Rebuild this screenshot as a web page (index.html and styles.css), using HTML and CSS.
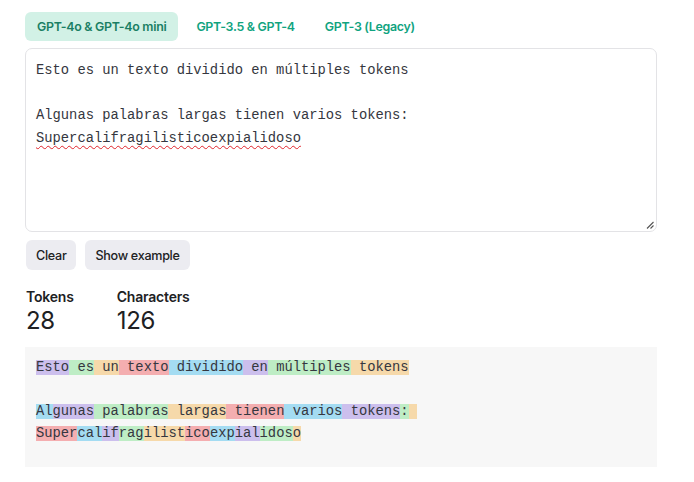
FILE: index.html
```html
<!DOCTYPE html>
<html lang="es">
<head>
<meta charset="utf-8">
<title>Tokenizer</title>
<link rel="stylesheet" href="styles.css">
</head>
<body>
<div class="app">
  <div class="tabs">
    <button class="tab active">GPT-4o &amp; GPT-4o mini</button>
    <button class="tab">GPT-3.5 &amp; GPT-4</button>
    <button class="tab">GPT-3 (Legacy)</button>
  </div>
  <div class="editor">
    <div class="editor-text">Esto es un texto dividido en múltiples tokens

Algunas palabras largas tienen varios tokens:
<span class="misspelled">Supercalifragilisticoexpialidoso</span></div>
    <svg class="resize" width="8" height="8" viewBox="0 0 8 8"><path d="M1 7.5 L7.5 1 M4.5 7.5 L7.5 4.5" stroke="#555" stroke-width="1.1" fill="none"/></svg>
  </div>
  <div class="actions">
    <button class="btn">Clear</button>
    <button class="btn">Show example</button>
  </div>
  <div class="stats">
    <div class="stat">
      <div class="stat-label">Tokens</div>
      <div class="stat-value">28</div>
    </div>
    <div class="stat">
      <div class="stat-label">Characters</div>
      <div class="stat-value">126</div>
    </div>
  </div>
  <div class="output"><span class="t0">Esto</span><span class="t1"> es</span><span class="t2"> un</span><span class="t3"> texto</span><span class="t4"> dividido</span><span class="t0"> en</span><span class="t1"> múltiples</span><span class="t2"> tokens</span>

<span class="t4">Al</span><span class="t0">gunas</span><span class="t1"> palabras</span><span class="t2"> largas</span><span class="t3"> tienen</span><span class="t4"> varios</span><span class="t0"> tokens</span><span class="t1">:</span><span class="t2"> </span>
<span class="t3">Super</span><span class="t4">cal</span><span class="t0">if</span><span class="t1">rag</span><span class="t2">ilist</span><span class="t3">ico</span><span class="t4">exp</span><span class="t0">ial</span><span class="t1">idos</span><span class="t2">o</span></div>
</div>
</body>
</html>
```
FILE: styles.css
```css
* { box-sizing: border-box; }
html, body { margin: 0; padding: 0; background: #ffffff; }
body {
  font-family: "Inter", "Liberation Sans", sans-serif;
  color: #202123;
}
.app {
  width: 632px;
  margin-left: 25px;
  padding-top: 12px;
}
.tabs {
  display: flex;
  gap: 6px;
}
.tab {
  border: none;
  background: transparent;
  font-family: inherit;
  font-size: 12.4px;
  font-weight: 600;
  letter-spacing: -0.3px;
  line-height: 17px;
  padding: 6px 12px;
  border-radius: 6px;
  color: #10a37f;
}
.tab.active {
  background: #d2f1e6;
  color: #1a7f64;
}
.editor {
  position: relative;
  margin-top: 7px;
  height: 184px;
  border: 1px solid #e3e3e6;
  border-radius: 7px;
  padding: 11px 10px 10px;
}
.editor-text {
  font-family: "Liberation Mono", monospace;
  font-size: 13.8px;
  line-height: 22.5px;
  white-space: pre;
  color: #353740;
}
.misspelled {
  text-decoration: underline wavy #e0242b;
  text-decoration-thickness: 1px;
  text-underline-offset: 3px;
}
.resize {
  position: absolute;
  right: 2px;
  bottom: 2px;
}
.actions {
  display: flex;
  gap: 9px;
  margin-top: 8px;
  padding-left: 1px;
}
.btn {
  border: none;
  background: #ececf1;
  border-radius: 6px;
  font-family: inherit;
  font-size: 12.6px;
  font-weight: 500;
  letter-spacing: -0.3px;
  color: #202123;
  height: 30px;
  padding: 0 10px;
}
.stats {
  display: flex;
  gap: 43px;
  margin-top: 17px;
  padding-left: 1px;
}
.stat-label {
  font-size: 14px;
  font-weight: 600;
  line-height: 20px;
  letter-spacing: -0.2px;
}
.stat-value {
  font-size: 24px;
  font-weight: 400;
  line-height: 28px;
  letter-spacing: -0.3px;
}
.output {
  margin-top: 12px;
  height: 120px;
  background: #f7f7f7;
  padding: 10px 11px 7px;
  font-family: "Liberation Mono", monospace;
  font-size: 13.8px;
  line-height: 22px;
  white-space: pre;
  color: #353740;
}
.t0 { background: rgba(107, 64, 216, 0.3); }
.t1 { background: rgba(104, 222, 122, 0.4); }
.t2 { background: rgba(244, 172, 54, 0.4); }
.t3 { background: rgba(239, 65, 70, 0.4); }
.t4 { background: rgba(39, 181, 234, 0.4); }
```
